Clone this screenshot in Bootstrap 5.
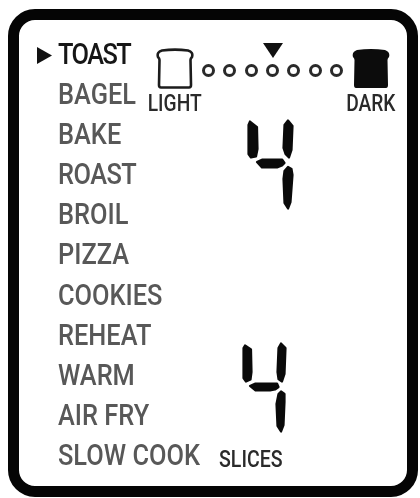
<!DOCTYPE html>
<html lang="en"><head><meta charset="utf-8">
<link href="https://cdn.jsdelivr.net/npm/bootstrap@5.3.0/dist/css/bootstrap.min.css" rel="stylesheet">
<style>
html,body{margin:0;background:#fff;height:498px;overflow:hidden}
body{padding:9px 2px 1px 8px;font-family:Roboto,"Liberation Sans",sans-serif}
.lcd-frame{width:410px;height:488px;border:11px solid #050505;border-radius:27px;padding:14px 0 0 17px;filter:blur(.5px)}
.menu-col{width:112px;flex:none}
.menu-row{height:40.1px;line-height:40.1px;font-size:29px;font-weight:500;color:#585858;white-space:nowrap;padding-left:22px;position:relative}
.menu-row.on{color:#161616}
.squeeze{display:inline-block;transform:scaleX(.875);transform-origin:left center}
.kern-t{letter-spacing:-1.8px}
.kern-s{letter-spacing:-.6px}
.pointer{position:absolute;left:1px;top:13px;width:15px;height:17px}
.side-col{width:249px;flex:none;padding-top:9px}
.ends{width:53px;flex:none}
.ends svg{display:block;margin-top:5px}
.end-label{font-size:24px;font-weight:500;line-height:24px;margin-top:2px;color:#2a2a2a;white-space:nowrap;transform:scaleX(.8)}
.dial{width:143px;flex:none}
.dial svg{display:block;margin:0 auto}
.dots{gap:8.4px;margin-top:5.5px}
.dot{width:13px;height:13px;border:3px solid #2a2a2a;border-radius:50%;display:block}
.digit-a{display:block;margin:4px 0 0 99px}
.digit-b{display:block;margin:132px 0 0 94px}
.slices{font-size:23px;font-weight:500;line-height:24px;color:#2a2a2a;margin:15px 0 0 71px;white-space:nowrap;transform:scaleX(.85);transform-origin:left center}
.seg{fill:#0a0a0a;stroke:#0a0a0a;stroke-width:2.2;stroke-linejoin:round}
</style></head>
<body>
<div class="lcd-frame d-flex">
  <ul class="menu-col list-unstyled m-0">
    <li class="menu-row on"><svg class="pointer" viewBox="0 0 15 17"><path d="M0 0L15 8.5L0 17Z" fill="#111"/></svg><span class="squeeze kern-t">TOAST</span></li>
    <li class="menu-row"><span class="squeeze">BAGEL</span></li>
    <li class="menu-row"><span class="squeeze">BAKE</span></li>
    <li class="menu-row"><span class="squeeze kern-s">ROAST</span></li>
    <li class="menu-row"><span class="squeeze">BROIL</span></li>
    <li class="menu-row"><span class="squeeze">PIZZA</span></li>
    <li class="menu-row"><span class="squeeze">COOKIES</span></li>
    <li class="menu-row"><span class="squeeze">REHEAT</span></li>
    <li class="menu-row"><span class="squeeze">WARM</span></li>
    <li class="menu-row"><span class="squeeze">AIR FRY</span></li>
    <li class="menu-row"><span class="squeeze">SLOW COOK</span></li>
  </ul>
  <div class="side-col">
    <div class="d-flex">
      <div class="ends d-flex flex-column align-items-center">
        <svg width="38" height="41" viewBox="0 0 38 41"><path d="M5 39.5H33Q35 39.5 35 37L34.5 12Q34.5 10.5 36 9Q37.5 4 32 2.5Q19 .8 6 2.5Q.5 4 2 9Q3.5 10.5 3.5 12L3 37Q3 39.5 5 39.5Z" fill="#fff" stroke="#1c1c1c" stroke-width="2.6"/></svg>
        <div class="end-label">LIGHT</div>
      </div>
      <div class="dial">
        <svg width="20" height="15" viewBox="0 0 20 15"><path d="M0 0H20L10 15Z" fill="#111"/></svg>
        <div class="dots d-flex justify-content-center">
          <span class="dot"></span><span class="dot"></span><span class="dot"></span><span class="dot"></span><span class="dot"></span><span class="dot"></span><span class="dot"></span>
        </div>
      </div>
      <div class="ends d-flex flex-column align-items-center">
        <svg width="38" height="41" viewBox="0 0 38 41"><path d="M4 40H34Q36 40 36 37L35.5 12Q35.5 10.5 37 9Q38.5 4 33 2Q19 .2 5 2Q-.5 4 1 9Q2.5 10.5 2.5 12L2 37Q2 40 4 40Z" fill="#0c0c0c"/></svg>
        <div class="end-label">DARK</div>
      </div>
    </div>
    <svg class="digit-a" width="47" height="91" viewBox="0 0 47 91"><g class="seg"><path d="M1.5 6L3 2.5L10 8L10.5 30L9 37.5L4 38.5L1.5 35Z"/><path d="M41 1.5L45.5 7L44.5 31L42 38.5L38.5 35L36.5 29L37.5 6Z"/><path d="M10 43L15.5 40.5H35L37.5 44L35 46.5L30 48.5H15Z"/><path d="M41 48L44.5 50L45.5 56L43.5 83L41 89.5L37.5 84L36.5 60L37.5 52Z"/></g></svg>
    <svg class="digit-b" width="45" height="91" viewBox="0 0 45 91"><g class="seg"><path d="M1.5 6L3 3.5L9 7.5L9.5 30L8.5 37.5L4 39.5L1.5 36Z"/><path d="M39 1.5L43.5 6L42.5 32L40 39.5L36.5 37L35.5 30L36.5 6Z"/><path d="M8 44L13.5 41.5H35L36.5 45L33 47.5L28 48.5H13.5Z"/><path d="M39 49.5L42.5 52L42.5 60L41.5 83L39 89.5L35.5 84L34.5 62L36.5 52Z"/></g></svg>
    <div class="slices">SLICES</div>
  </div>
</div>
<script src="https://cdn.jsdelivr.net/npm/bootstrap@5.3.0/dist/js/bootstrap.bundle.min.js"></script>
</body></html>
